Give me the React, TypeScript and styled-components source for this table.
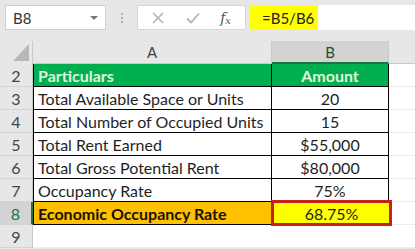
import React from "react";
import styled, { createGlobalStyle } from "styled-components";

const GlobalStyle = createGlobalStyle`
  html, body {
    margin: 0;
    padding: 0;
    background: #ffffff;
  }
  body {
    font-family: "Lato", "Liberation Sans", sans-serif;
    overflow: hidden;
  }
`;

type Row = {
  num: number;
  label: string;
  value: string;
  kind?: "head" | "result";
};

const rows: Row[] = [
  { num: 2, label: "Particulars", value: "Amount", kind: "head" },
  { num: 3, label: "Total Available Space or Units", value: "20" },
  { num: 4, label: "Total Number of Occupied Units", value: "15" },
  { num: 5, label: "Total Rent Earned", value: "$55,000" },
  { num: 6, label: "Total Gross Potential Rent", value: "$80,000" },
  { num: 7, label: "Occupancy Rate", value: "75%" },
  { num: 8, label: "Economic Occupancy Rate", value: "68.75%", kind: "result" },
];

const App = () => {
  return (
    <Page>
      <GlobalStyle />
      <FormulaBar>
        <NameBox>
          <span>B8</span>
          <Caret />
        </NameBox>
        <Dots>
          <i />
          <i />
          <i />
        </Dots>
        <Buttons>
          <svg width="14" height="14" viewBox="0 0 14 14">
            <path d="M2 2 L12 12 M12 2 L2 12" stroke="#b4b4b4" strokeWidth="1.6" fill="none" />
          </svg>
          <svg width="16" height="14" viewBox="0 0 16 14">
            <path d="M2 7.5 L6 11.5 L14 2.5" stroke="#b4b4b4" strokeWidth="1.8" fill="none" />
          </svg>
          <Fx>
            f<sub>x</sub>
          </Fx>
        </Buttons>
        <Formula>
          <Highlight>=B5/B6</Highlight>
        </Formula>
      </FormulaBar>
      <Sheet>
        <Corner>
          <svg width="16" height="17" viewBox="0 0 16 17">
            <path d="M16 0 L16 17 L0 17 Z" fill="#b8b8b8" />
          </svg>
        </Corner>
        <ColHead>A</ColHead>
        <ColHead $selected>B</ColHead>
        <Blank $head />
        {rows.map((r) => (
          <React.Fragment key={r.num}>
            <RowHead $selected={r.kind === "result"}>{r.num}</RowHead>
            <LabelCell $kind={r.kind}>{r.label}</LabelCell>
            <ValueCell $kind={r.kind}>{r.value}</ValueCell>
            <Blank />
          </React.Fragment>
        ))}
        <RowHead>9</RowHead>
        <Blank />
        <Blank />
        <Blank />
      </Sheet>
    </Page>
  );
};

export default App;

const Page = styled.div`
  width: 415px;
  height: 249px;
  overflow: hidden;
  background: #e7e7e7;
`;

const FormulaBar = styled.div`
  height: 41px;
  box-sizing: border-box;
  padding-top: 5px;
  display: flex;
  align-items: flex-start;
`;

const NameBox = styled.div`
  margin-left: 5px;
  width: 101px;
  height: 25px;
  box-sizing: border-box;
  background: #ffffff;
  border: 1px solid #d0d0d0;
  display: flex;
  align-items: center;
  justify-content: space-between;
  padding: 0 7px 0 7px;
  font-size: 15px;
  color: #333;
`;

const Caret = styled.span`
  width: 0;
  height: 0;
  border-left: 4px solid transparent;
  border-right: 4px solid transparent;
  border-top: 4px solid #777;
  margin-top: 1px;
`;

const Dots = styled.div`
  width: 31px;
  height: 25px;
  display: flex;
  flex-direction: column;
  align-items: center;
  justify-content: center;
  gap: 2px;

  i {
    width: 2px;
    height: 2px;
    background: #b0b0b0;
    display: block;
  }
`;

const Buttons = styled.div`
  width: 109px;
  height: 25px;
  box-sizing: border-box;
  background: #ffffff;
  border: 1px solid #d6d6d6;
  display: flex;
  align-items: center;
  justify-content: space-between;
  padding: 0 14px 0 13px;
`;

const Fx = styled.span`
  font-family: "DejaVu Serif", "Liberation Serif", serif;
  font-style: italic;
  font-size: 14px;
  color: #555;

  sub {
    font-size: 10px;
    vertical-align: -1px;
  }
`;

const Formula = styled.div`
  margin-left: 4px;
  flex: 1;
  height: 25px;
  background: #ffffff;
  display: flex;
`;

const Highlight = styled.div`
  width: 68px;
  background: #ffff00;
  font-size: 15px;
  color: #222;
  display: flex;
  align-items: center;
  padding-left: 12px;
  box-sizing: border-box;
`;

const Sheet = styled.div`
  display: grid;
  grid-template-columns: 33px 239px 117px 1fr;
  grid-auto-rows: 23px;
  background: #ffffff;
`;

const Corner = styled.div`
  background: #e7e7e7;
  border-right: 1px solid #c8c8c8;
  display: flex;
  align-items: flex-end;
  justify-content: flex-end;
  padding: 0 3px 3px 0;
`;

const ColHead = styled.div<{ $selected?: boolean }>`
  background: ${({ $selected }) => ($selected ? "#d3d3d3" : "#e7e7e7")};
  border-right: 1px solid #c8c8c8;
  border-bottom: ${({ $selected }) => ($selected ? "2px solid #217346" : "1px solid #c8c8c8")};
  display: flex;
  align-items: center;
  justify-content: center;
  font-size: 15px;
  color: ${({ $selected }) => ($selected ? "#1e4d2f" : "#444")};
`;

const RowHead = styled.div<{ $selected?: boolean }>`
  background: ${({ $selected }) => ($selected ? "#d3d3d3" : "#e7e7e7")};
  border-bottom: 1px solid #d4d4d4;
  border-right: ${({ $selected }) => ($selected ? "2px solid #217346" : "1px solid #c8c8c8")};
  display: flex;
  align-items: center;
  justify-content: center;
  font-size: 16px;
  color: ${({ $selected }) => ($selected ? "#217346" : "#444")};
`;

const Blank = styled.div<{ $head?: boolean }>`
  background: ${({ $head }) => ($head ? "#e7e7e7" : "#ffffff")};
  border-bottom: 1px solid ${({ $head }) => ($head ? "#c8c8c8" : "#ececec")};
`;

const cellBg = (kind?: string) =>
  kind === "head" ? "#00b050" : kind === "result" ? "#ffc000" : "#ffffff";

const LabelCell = styled.div<{ $kind?: string }>`
  background: ${({ $kind }) => cellBg($kind)};
  border-left: 1px solid #000;
  border-right: 1px solid #000;
  border-bottom: 1px solid #000;
  display: flex;
  align-items: center;
  padding-left: 4px;
  font-size: 16px;
  white-space: nowrap;
  font-weight: ${({ $kind }) => ($kind ? 700 : 400)};
  color: ${({ $kind }) => ($kind === "head" ? "#e2f3dc" : $kind === "result" ? "#1a1206" : "#1f1f1f")};
`;

const ValueCell = styled.div<{ $kind?: string }>`
  background: ${({ $kind }) => ($kind === "result" ? "#ffff00" : cellBg($kind))};
  border-right: 1px solid #000;
  border-bottom: 1px solid #000;
  display: flex;
  align-items: center;
  justify-content: center;
  font-size: 16px;
  font-weight: ${({ $kind }) => ($kind === "head" ? 700 : 400)};
  color: ${({ $kind }) => ($kind === "head" ? "#e2f3dc" : "#1f1f1f")};
  box-sizing: border-box;
  ${({ $kind }) =>
    $kind === "result" &&
    `
    position: relative;
    z-index: 1;
    border: 3px solid #c8211b;
    margin: -2px -3px -1px -1px;
  `}
`;
